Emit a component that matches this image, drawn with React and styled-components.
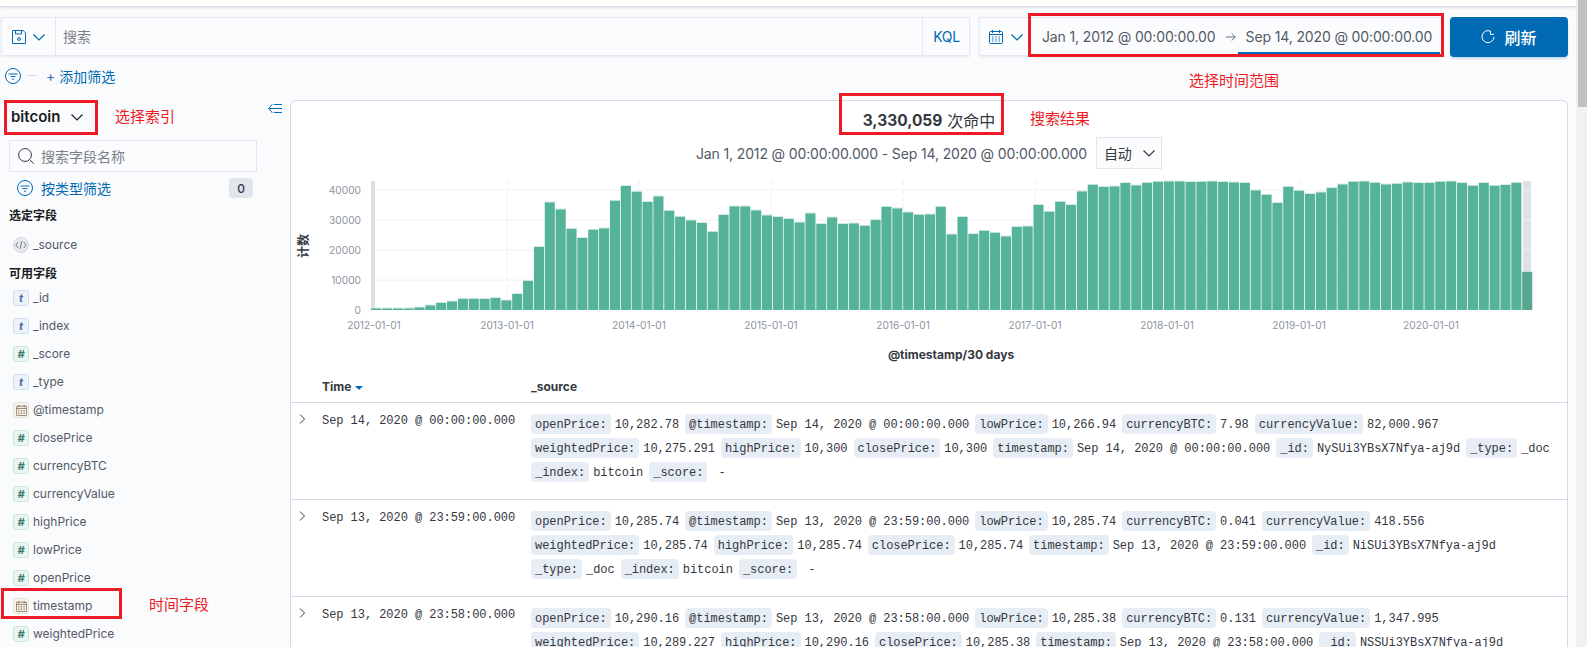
import React from 'react';
import styled, { createGlobalStyle } from 'styled-components';

const UI = '"Inter", "Noto Sans CJK SC", sans-serif';
const MONO = '"Liberation Mono", monospace';
const BLUE = '#006bb4';
const INK = '#343741';

const Global = createGlobalStyle`
  html, body { margin: 0; padding: 0; height: 647px; overflow: hidden; background: #fafbfd; }
  #root { height: 647px; }
  * { box-sizing: border-box; }
  svg { display: block; flex: none; }
`;

const Page = styled.div`
  display: flex; width: 1587px; height: 647px; overflow: hidden; position: relative;
  font-family: ${UI}; color: ${INK};
`;
const Main = styled.div`flex: none; width: 1576px; height: 647px; overflow: hidden; display: flex; flex-direction: column;`;
const Track = styled.div`flex: none; width: 11px; height: 647px; background: #f1f1f1; padding-left: 2px;`;
const Thumb = styled.div`height: 107px; background: #c1c1c1;`;

const TopBar = styled.div`flex: none; height: 7px; background: #fff; border-bottom: 1px solid #dbe0ea; box-shadow: 0 1px 2px rgba(152,162,179,.25);`;
const Toolbar = styled.div`flex: none; display: flex; padding: 10px 8px 0 1px; height: 49px;`;
const SearchBox = styled.div`
  flex: none; width: 969px; height: 39px; display: flex; align-items: stretch;
  background: #fbfcfd; border: 1px solid #e6e9f0; box-shadow: 0 1px 2px rgba(152,162,179,.18);
`;
const SaveCell = styled.div`flex: none; width: 54px; display: flex; align-items: center; padding-left: 10px; gap: 6px; border-right: 1px solid #e6e9f0;`;
const Placeholder = styled.div`flex: 1; display: flex; align-items: center; padding: 0 0 2px 7px; font-size: 14px; color: #7b808c;`;
const KqlCell = styled.div`flex: none; width: 47px; display: flex; align-items: center; justify-content: center; padding: 0 0 1px 1px; font-size: 14px; letter-spacing: -.4px; color: ${BLUE}; border-left: 1px solid #e6e9f0;`;
const DateGroup = styled.div`
  flex: none; width: 464px; height: 39px; margin-left: 9px; display: flex; position: relative;
  background: #fbfcfd; border: 1px solid #e6e9f0; box-shadow: 0 1px 2px rgba(152,162,179,.18);
`;
const CalendarCell = styled.div`flex: none; width: 48px; display: flex; align-items: center; padding-left: 9px; gap: 7px;`;
const DateText = styled.div`flex: none; display: flex; align-items: center; font-size: 14px; letter-spacing: -.13px; color: #535966; white-space: nowrap; padding-left: 14px; gap: 10px;`;
const DateUnderline = styled.div`position: absolute; left: 258px; right: 2px; bottom: 1px; height: 2px; background: ${BLUE};`;
const RefreshButton = styled.div`
  flex: none; width: 118px; height: 40px; margin-left: 7px; border-radius: 4px; background: ${BLUE}; color: #fff;
  display: flex; align-items: center; justify-content: center; gap: 9px; font-size: 16px; font-weight: 500;
  box-shadow: 0 2px 2px rgba(0,107,180,.2);
`;
const FilterBar = styled.div`flex: none; height: 24px; margin-top: 8px; padding: 0 0 1px 5px; display: flex; align-items: center; font-size: 14px; color: ${BLUE};`;
const Dash = styled.span`width: 10px; height: 1px; background: #d3dae6; margin: 0 9px 0 6px;`;
const Plus = styled.span`font-size: 14px; margin-right: 4px; line-height: 1; color: #3b6fb4;`;

const Content = styled.div`flex: 1; display: flex; margin-top: 12px; min-height: 0;`;
const Sidebar = styled.aside`flex: none; width: 290px; display: flex; flex-direction: column;`;
const IndexRow = styled.div`flex: none; height: 35px; display: flex; padding: 0 8px 0 11px; justify-content: space-between;`;
const IndexName = styled.div`display: flex; align-items: center; gap: 10px; padding-bottom: 2px; font-size: 15px; font-weight: 600; color: #1a1c21;`;
const CollapseWrap = styled.div`padding-top: 3px;`;
const FieldSearch = styled.div`
  flex: none; margin: 5px 0 0 9px; width: 248px; height: 32px; display: flex; align-items: center; gap: 7px; padding: 0 0 1px 8px;
  background: #fbfcfd; border: 1px solid #e3e6ef; font-size: 14px; color: #7b808c;
`;
const TypeFilter = styled.div`flex: none; height: 24px; margin-top: 4px; padding: 0 4px 0 17px; display: flex; align-items: center; gap: 8px; font-size: 14px; color: ${BLUE}; width: 257px;`;
const Count = styled.span`margin-left: auto; width: 24px; height: 20px; border-radius: 3px; background: #e0e5ee; color: ${INK}; font-size: 12px; font-weight: 500; display: flex; align-items: center; justify-content: center;`;
const Heading = styled.div`flex: none; height: 16px; line-height: 16px; padding-left: 9px; margin-top: ${p => p.$top}px; font-size: 12px; font-weight: 700; color: #1a1c21;`;
const FieldList = styled.div`flex: none; display: flex; flex-direction: column; margin-top: ${p => p.$top}px;`;
const FieldRow = styled.div`flex: none; height: 28px; display: flex; align-items: center; gap: 4px; padding: 0 0 2px 13px; font-size: 12px; color: #535966;`;

const tokenStyles = {
  text: ['#eef3f9', '#cfdeee', '#3f6f9f'],
  num: ['#e9f6f2', '#cbe8df', '#3a7d6c'],
  date: ['#f7f3ec', '#ebe4d6', '#7b6a4e'],
  src: ['#e9eaee', '#d3d5dc', '#6a6f7b'],
};
const Token = styled.span`
  flex: none; width: 16px; height: 16px; margin-top: 2px; display: flex; align-items: center; justify-content: center;
  border-radius: ${p => (p.$kind === 'src' ? '50%' : '3px')};
  background: ${p => tokenStyles[p.$kind][0]}; border: 1px solid ${p => tokenStyles[p.$kind][1]};
  color: ${p => tokenStyles[p.$kind][2]}; font-size: 11px; font-weight: 700; font-style: italic; line-height: 1;
`;

const Card = styled.section`
  flex: none; width: 1278px; background: #fff; border: 1px solid #d3dae6; border-bottom: 0;
  border-radius: 6px 6px 0 0; display: flex; flex-direction: column;
`;
const Hits = styled.div`flex: none; height: 24px; margin-top: 7px; display: flex; justify-content: center; align-items: center; gap: 5px; font-size: 16px; color: ${INK};`;
const HitCount = styled.strong`font-weight: 700; font-size: 15.5px;`;
const RangeRow = styled.div`flex: none; height: 32px; margin-top: 5px; display: flex; justify-content: center; align-items: center; gap: 9px; font-size: 14px; letter-spacing: -.14px; color: #535966;`;
const IntervalSelect = styled.div`width: 66px; height: 32px; background: #fbfcfd; border: 1px solid #e3e6ef; display: flex; align-items: center; gap: 10px; padding-left: 7px; color: ${INK};`;
const ChartSvg = styled.svg`flex: none; display: block; width: 1276px; height: 202px; font-family: ${UI};`;
const TableHead = styled.div`flex: none; height: 32px; border-bottom: 1px solid #d3dae6; display: flex; align-items: center; font-size: 12px; font-weight: 700; color: #343741;`;
const HeadTime = styled.div`width: 240px; padding-left: 31px; display: flex; align-items: center; gap: 4px;`;
const SortCaret = styled.span`width: 0; height: 0; border-style: solid; border-color: ${BLUE} transparent transparent; border-width: 4px 4px 0; margin-top: 3px;`;
const Row = styled.div`flex: none; display: flex; height: 97px; border-bottom: 1px solid #d3dae6; padding-top: 11px;`;
const Expand = styled.div`flex: none; width: 31px; margin-top: -1px; padding-left: 7px;`;
const TimeCell = styled.div`flex: none; width: 209px; font-family: ${MONO}; font-size: 12px; letter-spacing: -.05px; line-height: 14px; color: #343741; white-space: pre;`;
const SourceList = styled.dl`flex: none; width: 1032px; margin: 0; display: flex; flex-wrap: wrap; align-content: flex-start; font-family: ${MONO}; font-size: 12px; letter-spacing: -.04px; color: #343741;`;
const SourceItem = styled.div`display: flex; height: 20px; margin: 0 6px 4px 0; line-height: 22px; white-space: pre;`;
const Key = styled.dt`background: #e7edf4; border-radius: 4px; padding: 0 4px; margin-right: 4px;`;
const Value = styled.dd`margin: 0;`;

const RedBox = styled.div`
  position: absolute; left: ${p => p.$x}px; top: ${p => p.$y}px; width: ${p => p.$w}px; height: ${p => p.$h}px;
  border: 3px solid #ed1c24; pointer-events: none;
`;
const RedNote = styled.div`
  position: absolute; left: ${p => p.$x}px; top: ${p => p.$y - 11}px; line-height: 22px; font-size: 15px;
  color: #ed1c24; white-space: nowrap; font-family: "Noto Sans CJK SC", sans-serif;
`;

const Chevron = ({ size = 14, color = BLUE, width = 1.2 }) => (
  <svg width={size} height={size} viewBox="0 0 14 14" fill="none" stroke={color} strokeWidth={width}><path d="M1.5 4.5 7 10l5.5-5.5" /></svg>
);
const SaveIcon = () => (
  <svg width="14" height="14" viewBox="0 0 14 14" fill="none" stroke={BLUE} strokeWidth="1">
    <path d="M.5.5h10.6l2.4 2.4v10.6H.5z" /><path d="M3.5.5v3.5h6V.5" /><circle cx="7" cy="9" r="1.4" />
  </svg>
);
const CalendarIcon = ({ color = BLUE, size = 14 }) => (
  <svg width={size} height={size} viewBox="0 0 14 14" fill="none" stroke={color} strokeWidth="1">
    <rect x=".5" y="1.5" width="13" height="12" rx="1" /><path d="M.5 4.5h13M3.5 0v3M10.5 0v3" />
    <path d="M3 7h1.4M6.3 7h1.4M9.6 7h1.4M3 9h1.4M6.3 9h1.4M9.6 9h1.4M3 11h1.4M6.3 11h1.4M9.6 11h1.4" strokeWidth="1.2" />
  </svg>
);
const FilterIcon = () => (
  <svg width="16" height="16" viewBox="0 0 16 16" fill="none" stroke={BLUE} strokeWidth="1"><circle cx="8" cy="8" r="7.5" /><path d="M3.5 6h9M5.5 8.6h5M7 11.2h2" /></svg>
);
const ArrowIcon = () => (
  <svg width="10" height="10" viewBox="0 0 10 10" fill="none" stroke="#69707d" strokeWidth="1"><path d="M0 5h9.3M5.7 1.5 9.3 5 5.7 8.5" /></svg>
);
const RefreshIcon = () => (
  <svg width="14" height="14" viewBox="0 0 14 14" fill="none" stroke="#fff" strokeWidth="1"><path d="M9.5 1.2A6 6 0 1 0 13 7" /><path d="M9.5 1v3.4H13" /></svg>
);
const SearchIcon = () => (
  <svg width="16" height="16" viewBox="0 0 16 16" fill="none" stroke={INK} strokeWidth="1"><circle cx="7" cy="7" r="6.4" /><path d="m11.7 11.7 4 4" /></svg>
);
const CollapseIcon = () => (
  <svg width="14" height="11" viewBox="0 0 14 11" fill="none" stroke={BLUE} strokeWidth="1"><path d="M4.5 1 .8 5.5 4.5 10M1 5.5h13M6 1.5h8M6 9.5h8" /></svg>
);
const RowChevron = () => (
  <svg width="10" height="12" viewBox="0 0 10 12" fill="none" stroke="#343741" strokeWidth="1"><path d="m2 1.5 4.5 4.5L2 10.5" /></svg>
);
const CodeIcon = () => (
  <svg width="12" height="12" viewBox="0 0 12 12" fill="none" stroke="currentColor" strokeWidth=".9"><path d="M3.2 3 .8 6l2.4 3M8.8 3l2.4 3-2.4 3M7 2 5 10" /></svg>
);

const heights = [1.7,1.7,1.7,1.7,2.7,4.7,7,8.7,11.3,11.3,11,12,9.7,16,29,63,107.7,100.7,81.3,72,80.3,81.7,109.3,124,118.3,108,113.7,99.3,93.3,89.7,87,78.3,95,103.7,103.7,99.7,94.7,93,91,87.7,96.7,86,92.7,86,86.7,84.3,90,103.3,101.7,97.7,95.3,95.7,103.3,75.7,93,76,79.3,77.3,73.7,83,83.7,105,98.3,108.3,105,118.7,125.3,123,123.7,127,124.7,127.3,128.3,128.7,128.7,128,128.3,128.7,128,127.7,127,119.7,115.3,107,123.3,119.3,116,117.7,122,125.7,128.3,128.7,127.3,125.7,126.3,127.7,127,127,128.3,128.7,127,124.3,127,124.3,125,127.3,38];
const yTicks = [[40000, 191], [30000, 221], [20000, 251], [10000, 281], [0, 311]];
const xTicks = [[2012, 374], [2013, 507], [2014, 639], [2015, 771], [2016, 903], [2017, 1035], [2018, 1167], [2019, 1299], [2020, 1431]];

const Chart = () => (
  <ChartSvg viewBox="291 170 1276 202">
    <rect x="371" y="182" width="4" height="129" fill="#dfe0e6" />
    <rect x="1523" y="182" width="8" height="129" fill="#e0e1e6" />
    {yTicks.slice(0, 4).map(([, y]) => <line key={y} x1="375" x2="1531" y1={y} y2={y} stroke="#f1f2f6" />)}
    {xTicks.slice(1).map(([, x]) => <line key={x} x1={x} x2={x} y1="182" y2="311" stroke="#f1f2f6" strokeWidth="1.5" strokeDasharray="4 4" />)}
    {heights.map((h, i) => (
      <rect key={i} x={371 + i * 10.86} y={311 - h} width="10.1" height={h} fill={i === 106 ? '#5aa590' : '#54b399'} />
    ))}
    {heights.map((h, i) => <rect key={i} x={371 + i * 10.86} y={311 - h - 0.6} width="10.1" height=".6" fill="#b5dfd3" />)}
    {yTicks.map(([v, y]) => <text key={v} x="361" y={y + 4} textAnchor="end" fontSize="10.2" fill="#8f95a1">{v}</text>)}
    {xTicks.map(([yr, x]) => <text key={yr} x={x} y="330" textAnchor="middle" fontSize="10.2" fill="#8f95a1">{yr}-01-01</text>)}
    <text x="0" y="0" transform="translate(308 247) rotate(-90)" textAnchor="middle" fontSize="12" fontWeight="700" fill="#343741">计数</text>
    <text x="951" y="360" textAnchor="middle" fontSize="12" fontWeight="700" fill="#343741">@timestamp/30 days</text>
  </ChartSvg>
);

const makeFields = (open, stamp, low, btc, cv, wp, hp, cp, id) => [
  ['openPrice', open], ['@timestamp', stamp], ['lowPrice', low], ['currencyBTC', btc], ['currencyValue', cv],
  ['weightedPrice', wp], ['highPrice', hp], ['closePrice', cp], ['timestamp', stamp], ['_id', id],
  ['_type', '_doc'], ['_index', 'bitcoin'], ['_score', ' -'],
];
const rows = [
  makeFields('10,282.78', 'Sep 14, 2020 @ 00:00:00.000', '10,266.94', '7.98', '82,000.967', '10,275.291', '10,300', '10,300', 'NySUi3YBsX7Nfya-aj9d'),
  makeFields('10,285.74', 'Sep 13, 2020 @ 23:59:00.000', '10,285.74', '0.041', '418.556', '10,285.74', '10,285.74', '10,285.74', 'NiSUi3YBsX7Nfya-aj9d'),
  makeFields('10,290.16', 'Sep 13, 2020 @ 23:58:00.000', '10,285.38', '0.131', '1,347.995', '10,289.227', '10,290.16', '10,285.38', 'NSSUi3YBsX7Nfya-aj9d'),
];

const fields = [
  ['text', '_id'], ['text', '_index'], ['num', '_score'], ['text', '_type'], ['date', '@timestamp'], ['num', 'closePrice'],
  ['num', 'currencyBTC'], ['num', 'currencyValue'], ['num', 'highPrice'], ['num', 'lowPrice'], ['num', 'openPrice'],
  ['date', 'timestamp'], ['num', 'weightedPrice'],
];

const FieldToken = ({ kind }) => (
  <Token $kind={kind}>
    {kind === 'text' && 't'}
    {kind === 'num' && '#'}
    {kind === 'date' && <CalendarIcon color="#7b6a4e" size={11} />}
    {kind === 'src' && <CodeIcon />}
  </Token>
);

export default function App() {
  return (
    <Page>
      <Global />
      <Main>
        <TopBar />
        <Toolbar>
          <SearchBox>
            <SaveCell><SaveIcon /><Chevron /></SaveCell>
            <Placeholder>搜索</Placeholder>
            <KqlCell>KQL</KqlCell>
          </SearchBox>
          <DateGroup>
            <CalendarCell><CalendarIcon /><Chevron /></CalendarCell>
            <DateText>
              <span>Jan 1, 2012 @ 00:00:00.00</span>
              <ArrowIcon />
              <span>Sep 14, 2020 @ 00:00:00.00</span>
            </DateText>
            <DateUnderline />
          </DateGroup>
          <RefreshButton><RefreshIcon />刷新</RefreshButton>
        </Toolbar>
        <FilterBar><FilterIcon /><Dash /><Plus>+</Plus>添加筛选</FilterBar>
        <Content>
          <Sidebar>
            <IndexRow>
              <IndexName>bitcoin<Chevron color="#1a1c21" /></IndexName>
              <CollapseWrap><CollapseIcon /></CollapseWrap>
            </IndexRow>
            <FieldSearch><SearchIcon />搜索字段名称</FieldSearch>
            <TypeFilter><FilterIcon />按类型筛选<Count>0</Count></TypeFilter>
            <Heading $top={8}>选定字段</Heading>
            <FieldList $top={7}>
              <FieldRow><FieldToken kind="src" />_source</FieldRow>
            </FieldList>
            <Heading $top={7}>可用字段</Heading>
            <FieldList $top={2}>
              {fields.map(([kind, name]) => <FieldRow key={name}><FieldToken kind={kind} />{name}</FieldRow>)}
            </FieldList>
          </Sidebar>
          <Card>
            <Hits><HitCount>3,330,059</HitCount>次命中</Hits>
            <RangeRow>
              Jan 1, 2012 @ 00:00:00.000 - Sep 14, 2020 @ 00:00:00.000
              <IntervalSelect>自动<Chevron color={INK} /></IntervalSelect>
            </RangeRow>
            <Chart />
            <TableHead>
              <HeadTime>Time<SortCaret /></HeadTime>
              <span>_source</span>
            </TableHead>
            {rows.map((row, i) => (
              <Row key={i}>
                <Expand><RowChevron /></Expand>
                <TimeCell>{row[1][1]}</TimeCell>
                <SourceList>
                  {row.map(([k, v]) => (
                    <SourceItem key={k}><Key>{k}:</Key><Value>{v}</Value></SourceItem>
                  ))}
                </SourceList>
              </Row>
            ))}
          </Card>
        </Content>
      </Main>
      <Track><Thumb /></Track>
      <RedBox $x={1028} $y={13} $w={416} $h={44} />
      <RedBox $x={839} $y={93} $w={165} $h={42} />
      <RedBox $x={4} $y={100} $w={94} $h={35} />
      <RedBox $x={1} $y={588} $w={121} $h={31} />
      <RedNote $x={1189} $y={80}>选择时间范围</RedNote>
      <RedNote $x={1030} $y={118}>搜索结果</RedNote>
      <RedNote $x={115} $y={116}>选择索引</RedNote>
      <RedNote $x={149} $y={604}>时间字段</RedNote>
    </Page>
  );
}
